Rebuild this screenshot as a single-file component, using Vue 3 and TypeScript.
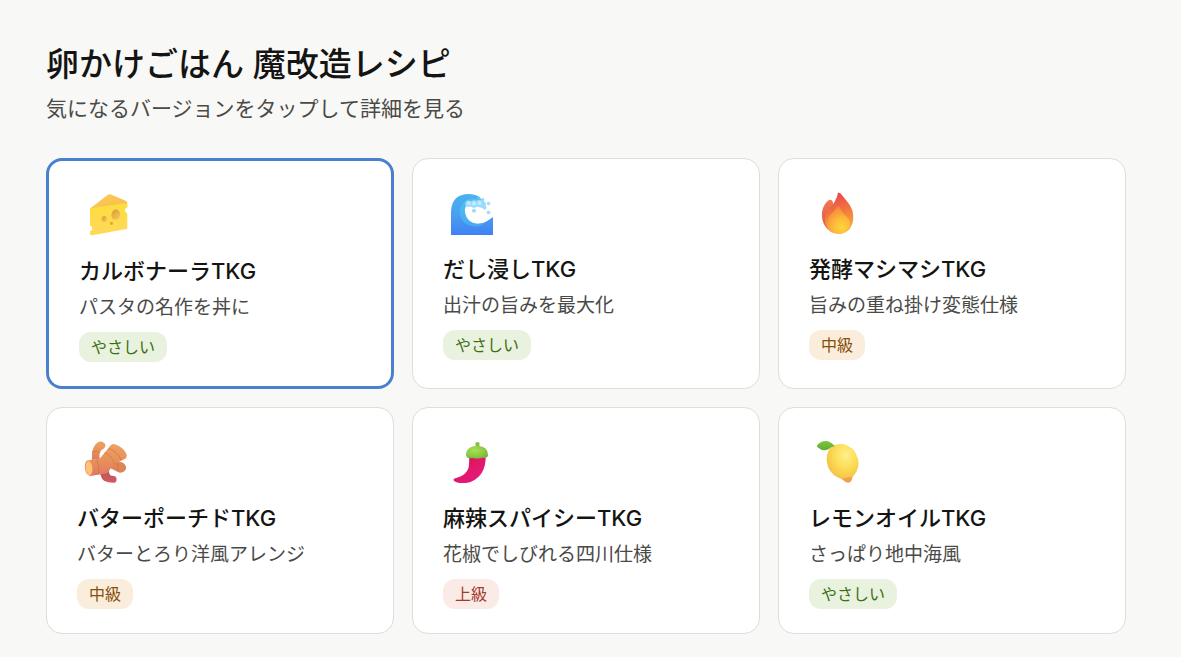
<script setup lang="ts">
import { ref } from 'vue'

type Level = 'easy' | 'middle' | 'hard'
type Icon = 'cheese' | 'wave' | 'fire' | 'ginger' | 'chili' | 'lemon'

interface Recipe {
  icon: Icon
  name: string
  description: string
  level: Level
}

const levelLabels: Record<Level, string> = {
  easy: 'やさしい',
  middle: '中級',
  hard: '上級',
}

const recipes: Recipe[] = [
  { icon: 'cheese', name: 'カルボナーラTKG', description: 'パスタの名作を丼に', level: 'easy' },
  { icon: 'wave', name: 'だし浸しTKG', description: '出汁の旨みを最大化', level: 'easy' },
  { icon: 'fire', name: '発酵マシマシTKG', description: '旨みの重ね掛け変態仕様', level: 'middle' },
  { icon: 'ginger', name: 'バターポーチドTKG', description: 'バターとろり洋風アレンジ', level: 'middle' },
  { icon: 'chili', name: '麻辣スパイシーTKG', description: '花椒でしびれる四川仕様', level: 'hard' },
  { icon: 'lemon', name: 'レモンオイルTKG', description: 'さっぱり地中海風', level: 'easy' },
]

const selected = ref<Icon>('cheese')
</script>

<template>
  <main class="page">
    <header class="header">
      <h1>卵かけごはん 魔改造レシピ</h1>
      <p>気になるバージョンをタップして詳細を見る</p>
    </header>

    <div class="grid">
      <button
        v-for="recipe in recipes"
        :key="recipe.icon"
        type="button"
        class="card"
        :class="{ selected: selected === recipe.icon }"
        :aria-pressed="selected === recipe.icon"
        @click="selected = recipe.icon"
      >
        <svg class="icon" viewBox="1 -2 58 60" aria-hidden="true">
          <g v-if="recipe.icon === 'cheese'" transform="translate(2 -2)">
            <defs>
              <linearGradient id="cheeseTop" x1="0" y1="0" x2="1" y2="1">
                <stop offset="0" stop-color="#f8cf55" />
                <stop offset="1" stop-color="#fdb94e" />
              </linearGradient>
              <linearGradient id="cheeseSide" x1="0" y1="0" x2="0" y2="1">
                <stop offset="0" stop-color="#fddd3d" />
                <stop offset="1" stop-color="#ffd95a" />
              </linearGradient>
              <linearGradient id="cheeseHole" x1="0" y1="0" x2="1" y2="1">
                <stop offset="0" stop-color="#d99a3c" />
                <stop offset="1" stop-color="#f8c957" />
              </linearGradient>
            </defs>
            <path d="M10 23.5 27.5 10Q29 8.800 31 9.500L46 16Q47.500 16.800 47.300 19L10.500 25Z" fill="url(#cheeseTop)" />
            <path d="M10 24.600Q10 23.500 11.200 23.200L45.500 18Q47.300 17.500 47.500 19.500V22.300A3.200 3.200 0 0 0 47.300 28.500V43Q47.300 43.800 46.300 44L12.500 50.300Q10 50.500 10 49V46.300A3 3 0 0 0 10 40.500Z" fill="url(#cheeseSide)" />
            <ellipse cx="35.800" cy="29.600" rx="4.300" ry="5.300" transform="rotate(12 35.800 29.600)" fill="url(#cheeseHole)" />
            <ellipse cx="24.300" cy="34" rx="2.600" ry="3" fill="url(#cheeseHole)" />
            <ellipse cx="31.500" cy="38.300" rx="1.500" ry="1.600" fill="#e4a236" />
          </g>

          <g v-else-if="recipe.icon === 'wave'" transform="translate(-2 0)">
            <defs>
              <linearGradient id="waveBody" x1="0" y1="0" x2="0" y2="1">
                <stop offset="0" stop-color="#4bb2ee" />
                <stop offset="0.500" stop-color="#4aa0f0" />
                <stop offset="1" stop-color="#4080f5" />
              </linearGradient>
              <linearGradient id="waveInner" x1="0" y1="0" x2="0" y2="1">
                <stop offset="0" stop-color="#4cc2f3" />
                <stop offset="1" stop-color="#4aa9f0" />
              </linearGradient>
            </defs>
            <path d="M11 50V27Q11.500 9 29 9Q38 9 42 15L27 22Q24 29 28.500 35Q33 40 42 38.500Q46 37 53 32V50Z" fill="url(#waveBody)" />
            <path d="M42 15Q30 11 23 18Q17.500 25 21 33Q25 41 35 41.500Q41 41.500 46 37Q35 41 29 35Q24 29 27 22Z" fill="url(#waveInner)" />
            <path d="M26 21H43L52.500 31Q45 38.500 37.500 38.500Q30 38 26.500 32Q23.500 26 26 21Z" fill="#fff" />
            <g fill="#9bdafb">
              <circle cx="28.500" cy="18.800" r="3.200" />
              <circle cx="34" cy="19" r="3.700" />
              <circle cx="39.500" cy="18.500" r="3.700" />
              <circle cx="42.500" cy="19.500" r="3.400" />
              <circle cx="44.500" cy="22.500" r="2" />
              <circle cx="34" cy="25.800" r="2" />
              <circle cx="48.500" cy="18.500" r="1.700" />
              <circle cx="48.500" cy="27.500" r="1.800" />
            </g>
            <g fill="#c4ecff">
              <circle cx="28.800" cy="18.300" r="1.700" />
              <circle cx="34" cy="18.500" r="2" />
              <circle cx="39.500" cy="18" r="2" />
            </g>
            <circle cx="38.500" cy="12.800" r="1.500" fill="#62c5f7" />
            <circle cx="42.500" cy="14.800" r="1.800" fill="#8edaff" />
          </g>

          <g v-else-if="recipe.icon === 'fire'">
            <defs>
              <linearGradient id="fireBack" x1="0.400" y1="0" x2="0.600" y2="1">
                <stop offset="0" stop-color="#ea4352" />
                <stop offset="0.400" stop-color="#f2703f" />
                <stop offset="0.750" stop-color="#f9983d" />
                <stop offset="1" stop-color="#fba23c" />
              </linearGradient>
              <linearGradient id="fireLeft" x1="0" y1="0" x2="0" y2="1">
                <stop offset="0" stop-color="#f07850" />
                <stop offset="1" stop-color="#e05a45" />
              </linearGradient>
              <radialGradient id="fireFront" gradientUnits="userSpaceOnUse" cx="34" cy="42" r="21">
                <stop offset="0" stop-color="#ffd53a" />
                <stop offset="0.400" stop-color="#fdbb3a" />
                <stop offset="1" stop-color="#f4813f" />
              </radialGradient>
            </defs>
            <path d="M21.500 14.800Q24.500 14.500 25 18L25 42L20 44.500Q16 41 14.500 35Q12.500 26 17 19Q19.500 15.500 21.500 14.800Z" fill="url(#fireLeft)" />
            <path d="M30 7.800Q31.500 7.200 33 9L40 17.500Q46 25 45.200 34.500Q43.500 47.500 31 49Q19.500 49 17 38Q16.500 29 22 23Q28.500 16 30 7.800Z" fill="url(#fireBack)" />
            <path d="M29.500 21Q31.500 21 32.500 24Q34 28 39 32Q43.500 36 42 41.500Q39 48 31.500 49Q22.500 48.500 19.800 41Q18.500 36 21.500 31Q26.500 26 29.500 21Z" fill="url(#fireFront)" />
          </g>

          <g v-else-if="recipe.icon === 'ginger'">
            <defs>
              <linearGradient id="gingerBody" x1="0" y1="0" x2="0" y2="1">
                <stop offset="0" stop-color="#f0a163" />
                <stop offset="0.600" stop-color="#e58e58" />
                <stop offset="1" stop-color="#e0746a" />
              </linearGradient>
              <linearGradient id="gingerFoot" x1="0" y1="0" x2="0" y2="1">
                <stop offset="0" stop-color="#b35b47" />
                <stop offset="1" stop-color="#d7566f" />
              </linearGradient>
            </defs>
            <path d="M24 38Q25 45 28.500 47Q32 49 38.500 48.800Q41 48 40.500 44.500Q40 42 36 41.800Q33 41.500 33 37Z" fill="url(#gingerFoot)" />
            <path d="M16 26V18Q18.500 9 23.500 7.500Q28 7 29.500 11Q29.500 14 25.500 16Q23 18.500 23.500 25Z" fill="url(#gingerBody)" />
            <path d="M36 29Q42 26.500 47 28.800Q51.500 32 49.500 36Q46 40.500 41 37.500L34 34Z" fill="#df8555" />
            <path d="M11 26.500L22 25Q24 24.500 25.500 22.500L34.500 11.500Q36.500 9 39.500 10.500Q48 13.500 50.800 21Q51 24 48.500 25L39 30Q34.500 33 33 37Q31.500 40 27 40L14 42Q9 40 8.800 33Q8.800 28 11 26.500Z" fill="url(#gingerBody)" />
            <ellipse cx="13" cy="34.200" rx="3.400" ry="7" transform="rotate(-5 13 34.200)" fill="#ffc274" />
            <path d="M20.500 26Q23.500 30 22.500 39.500M29 19Q36.500 22 38.500 30M33 14.500Q42 18 45 25.500M17 17.500Q21 16.500 23.500 18.500M41 29Q42.500 32 42 37" fill="none" stroke="#c66f47" stroke-width="0.800" stroke-linecap="round" opacity="0.800" />
          </g>

          <g v-else-if="recipe.icon === 'chili'">
            <defs>
              <linearGradient id="chiliBody" x1="0" y1="0" x2="0.800" y2="1">
                <stop offset="0" stop-color="#c9193e" />
                <stop offset="0.550" stop-color="#e2176a" />
                <stop offset="1" stop-color="#e41b80" />
              </linearGradient>
              <radialGradient id="chiliCap" cx="0.400" cy="0.350" r="0.700">
                <stop offset="0" stop-color="#a8e155" />
                <stop offset="0.600" stop-color="#8fc945" />
                <stop offset="1" stop-color="#78b43a" />
              </radialGradient>
            </defs>
            <path d="M27 21H43.500Q44.500 32 39 40Q33.500 47.500 24 49Q14 49.500 11.600 46.500Q11 44.500 15 43.800Q24 41.500 26.500 34Q27.500 29 27 21Z" fill="url(#chiliBody)" />
            <path d="M33.500 13V9Q34 8 35.500 8Q37 8 37.500 9V13Z" fill="#84c33a" />
            <path d="M24 20.500Q24.500 12 35 12Q46 12 46 21Q46 24 42 24Q40.500 23.500 38.500 24.300Q35 25 32 24.300Q30 23.500 28 24.300Q24 24 24 20.500Z" fill="url(#chiliCap)" />
          </g>

          <g v-else>
            <defs>
              <radialGradient id="lemonBody" cx="0.600" cy="0.280" r="0.800">
                <stop offset="0" stop-color="#fff08a" />
                <stop offset="0.450" stop-color="#fbdc55" />
                <stop offset="0.750" stop-color="#f6c648" />
                <stop offset="1" stop-color="#f0935c" />
              </radialGradient>
              <linearGradient id="lemonLeaf" x1="0" y1="0" x2="0" y2="1">
                <stop offset="0" stop-color="#7cc63a" />
                <stop offset="1" stop-color="#62ab38" />
              </linearGradient>
            </defs>
            <path d="M22 14Q18 20 18.800 28Q20.500 39 30 43.500Q34.500 45 37 47.500Q41 50 43.500 46.500Q44 43 46.500 40.500Q52 33.500 50 25Q47 12.500 35 10Q27 9.500 22 14Z" fill="url(#lemonBody)" />
            <path d="M34 45Q40.500 42 44.300 43.500Q43 48.800 40.500 48.800Q37.500 48.500 34 45Z" fill="#ee9058" opacity="0.600" />
            <path d="M9 11.500Q13 6.500 20 7.200Q23.500 8.500 26.800 12Q23 12.500 20 15.500Q15 17.800 9.800 13.500Q8.500 12.500 9 11.500Z" fill="url(#lemonLeaf)" />
          </g>
        </svg>

        <span class="name">{{ recipe.name }}</span>
        <span class="description">{{ recipe.description }}</span>
        <span class="tag" :class="recipe.level">{{ levelLabels[recipe.level] }}</span>
      </button>
    </div>
  </main>
</template>

<style>
html,
body {
  margin: 0;
  background: #f8f8f6;
}
</style>

<style scoped>
.page {
  padding: 40px 55px 23px 46px;
  font-family: Inter, "Noto Sans CJK JP", sans-serif;
  color: #141413;
}

.header {
  margin-bottom: 34px;
}

h1 {
  margin: 0 0 5px;
  font-size: 33px;
  line-height: 48px;
  font-weight: 500;
}

.header p {
  margin: 0;
  font-size: 21px;
  line-height: 31px;
  color: #4a4a47;
}

.grid {
  display: grid;
  grid-template-columns: repeat(3, minmax(0, 1fr));
  gap: 18px;
}

.card {
  display: flex;
  flex-direction: column;
  align-items: flex-start;
  justify-content: flex-start;
  padding: 24px 30px;
  border: 1px solid #dededb;
  border-radius: 16px;
  background: #fff;
  font-family: inherit;
  color: inherit;
  text-align: left;
  cursor: pointer;
}

.card.selected {
  border: 3px solid #4a80cf;
}

.icon {
  display: block;
  width: 58px;
  height: 60px;
  margin-bottom: 9px;
}

.name {
  margin-bottom: 5px;
  font-size: 22px;
  line-height: 34px;
  font-weight: 500;
}

.description {
  margin-bottom: 10px;
  font-size: 19px;
  line-height: 29px;
  color: #4a4a47;
}

.tag {
  padding: 0 12px;
  border-radius: 12px;
  font-size: 16px;
  line-height: 30px;
}

.tag.easy {
  background: #e9f2de;
  color: #3b6d11;
}

.tag.middle {
  background: #fbeddb;
  color: #854f0b;
}

.tag.hard {
  background: #fbebe7;
  color: #a33a2d;
}
</style>
